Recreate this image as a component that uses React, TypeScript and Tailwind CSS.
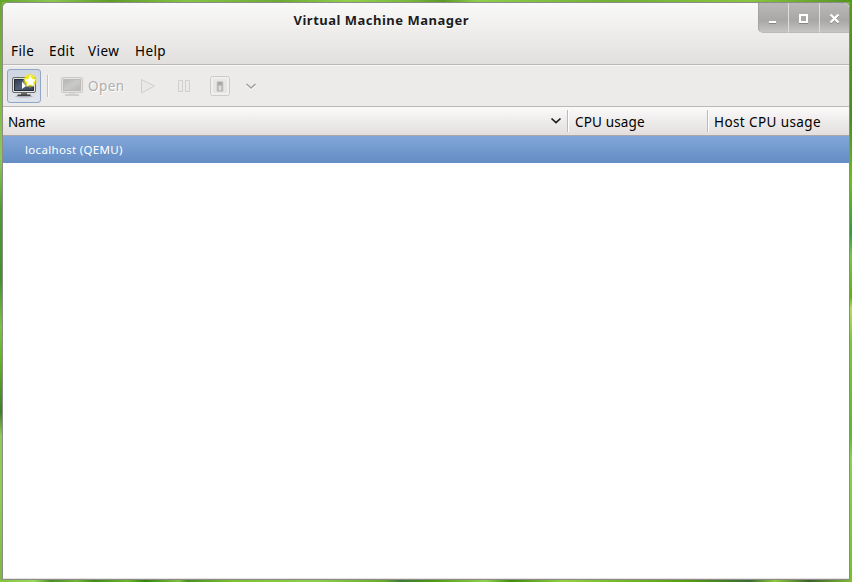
import type { ReactNode } from "react";

const font = "font-['Noto_Sans','Open_Sans',sans-serif]";

function TitleButton({ children, first = false }: { children: ReactNode; first?: boolean }) {
  return (
    <div
      className={`h-[30px] border-b border-[#bcbab9] bg-linear-to-b from-[#bab9b8] from-0% via-[#a8a7a6] via-60% to-[#c6c5c4] ${
        first ? "w-[30px] rounded-bl-[5px] border-l border-l-[#a5a4a3]" : "w-[31px] border-l border-l-[#dedddc]"
      }`}
    >
      {children}
    </div>
  );
}

function WindowControls() {
  return (
    <div className="flex h-[30px] w-[91px] shrink-0">
      <TitleButton first>
        <svg width="29" height="29" viewBox="0 0 29 29" shapeRendering="crispEdges">
          <rect x="10" y="20" width="7" height="1" fill="#858483" />
          <rect x="10" y="18" width="7" height="2" fill="#fff" />
        </svg>
      </TitleButton>
      <TitleButton>
        <svg width="30" height="29" viewBox="0 0 30 29" shapeRendering="crispEdges">
          <rect x="10" y="20" width="9" height="1" fill="#858483" />
          <path d="M10 11h9v9h-9z M12 13v5h5v-5z" fill="#fff" fillRule="evenodd" />
        </svg>
      </TitleButton>
      <TitleButton>
        <svg width="30" height="29" viewBox="0 0 30 29">
          <path d="M10.500 12.500l8 8M18.500 12.500l-8 8" stroke="#858483" strokeWidth="2" />
          <path d="M10.500 11.500l8 8M18.500 11.500l-8 8" stroke="#fff" strokeWidth="2.400" />
        </svg>
      </TitleButton>
    </div>
  );
}

function NewMachineIcon() {
  return (
    <svg width="26" height="26" viewBox="0 0 26 26">
      <defs>
        <linearGradient id="screen" x1="0" y1="0" x2="1" y2="1">
          <stop offset="0" stopColor="#323b50" />
          <stop offset=".5" stopColor="#52617b" />
          <stop offset="1" stopColor="#303a4e" />
        </linearGradient>
        <radialGradient id="glow">
          <stop offset="0" stopColor="#fff94c" />
          <stop offset=".6" stopColor="#f3eb08" />
          <stop offset="1" stopColor="#f5ed08" stopOpacity="0" />
        </radialGradient>
      </defs>
      <ellipse cx="13" cy="23.300" rx="9" ry="1.200" fill="#8c929a" opacity=".6" />
      <path d="M10 19h6v3h-6z" fill="#6b6d6c" />
      <path d="M6.500 21.500h13v1.500h-13z" fill="#40423f" />
      <rect x="1.500" y="4.500" width="23" height="15" rx="1.500" fill="#e3e4df" stroke="#686b66" />
      <rect x="3.500" y="6.500" width="19" height="11" fill="url(#screen)" stroke="#272e3b" />
      <path d="M11 8.500v7.500l4-3z" fill="#fff" />
      <circle cx="19" cy="7.500" r="7.500" fill="url(#glow)" />
      <path d="M19.200 1.900l1.800 4 4.300.5-3.200 2.900.9 4.400-3.800-2.200-3.900 2.200 1-4.400-3.200-2.900 4.300-.5z" fill="#fffff2" />
    </svg>
  );
}

function DisabledMonitorIcon() {
  return (
    <svg width="26" height="26" viewBox="0 0 26 26">
      <defs>
        <linearGradient id="grey" x1="0" y1="0" x2="1" y2="1">
          <stop offset="0" stopColor="#b5b5b3" />
          <stop offset=".5" stopColor="#c9c9c8" />
          <stop offset="1" stopColor="#b7b7b6" />
        </linearGradient>
      </defs>
      <path d="M10 18h6v3h-6z" fill="#d9d8d7" />
      <path d="M6 21h14v2H6z" fill="#cecdcc" />
      <rect x="2.500" y="4.500" width="21" height="15" rx="1.500" fill="#e4e3e2" stroke="#cbcac9" />
      <rect x="4.500" y="6.500" width="17" height="11" fill="url(#grey)" stroke="#bcbbba" />
    </svg>
  );
}

function Toolbar() {
  return (
    <div className="flex h-[42px] shrink-0 items-center border-b border-[#bab8b6] bg-[#edebea] pl-1 shadow-[inset_0_1px_0_#f8f7f6]">
      <div className="flex h-[34px] w-[34px] items-center justify-center rounded-[3px] border border-[#8ea6c8] bg-linear-to-b from-[#cfd6e1] to-[#dfe3ea]">
        <NewMachineIcon />
      </div>
      <div className="ml-1.5 h-[22px] w-0.5 border-l border-r border-l-[#c5c3c1] border-r-[#faf9f9]" />
      <div className="ml-[10px] h-[26px] w-[26px]">
        <DisabledMonitorIcon />
      </div>
      <span className="ml-[3px] w-[39px] text-[13.5px] leading-5 tracking-[0.4px] text-[#b0aeac] [text-shadow:1px_1px_0_#fff]">
        Open
      </span>
      <svg className="ml-3" width="20" height="20" viewBox="0 0 20 20">
        <path d="M2.500 3.500v13.500L15.500 10z" fill="#e9e8e7" stroke="#d0cfce" />
      </svg>
      <svg className="ml-4" width="20" height="20" viewBox="0 0 20 20">
        <path d="M3.500 4.500h4v11h-4zM10.500 4.500h4v11h-4z" fill="#ebeae9" stroke="#d0cfce" />
      </svg>
      <svg className="ml-[15px]" width="20" height="20" viewBox="0 0 20 20">
        <rect x=".5" y="0.500" width="19" height="19" rx="2" fill="#f0efee" stroke="#cccbca" />
        <rect x="3" y="3" width="14" height="14" rx="1" fill="#e7e6e5" />
        <rect x="7" y="5.500" width="6" height="10" rx="1" fill="#a9a8a7" stroke="#cccbca" />
        <rect x="8.500" y="9.500" width="3" height="5" fill="#dedddc" />
      </svg>
      <svg className="ml-[15px]" width="12" height="20" viewBox="0 0 12 20">
        <path d="M1.500 9l4.500 4 4.500-4" fill="none" stroke="#fff" strokeWidth="1.600" />
        <path d="M1.500 8l4.500 4 4.500-4" fill="none" stroke="#a3a19f" strokeWidth="1.600" />
      </svg>
    </div>
  );
}

function ListHeader() {
  return (
    <div className="flex h-[29px] shrink-0 items-center border-b border-[#a9a7aa] bg-linear-to-b from-[#fbfafa] to-[#e2dfdd] text-[13.5px] leading-5 text-black">
      <div className="flex w-[564px] items-center justify-between pr-[5px] pl-[5px]">
        <span className="pt-0.5 tracking-[-0.2px]">Name</span>
        <svg width="12" height="12" viewBox="0 0 12 12">
          <path d="M1.500 3.500l4.500 4.200 4.500-4.200" fill="none" stroke="#1d1d1d" strokeWidth="1.700" />
        </svg>
      </div>
      <div className="flex h-[22px] w-[140px] items-center border-l border-[#bcbab8] pl-[7px] shadow-[inset_1px_0_0_#fff]">
        <span className="pt-0.5 tracking-[0.15px]">CPU usage</span>
      </div>
      <div className="flex h-[22px] flex-1 items-center border-l border-[#bcbab8] pl-[6px] shadow-[inset_1px_0_0_#fff]">
        <span className="pt-0.5 tracking-[0.4px]">Host CPU usage</span>
      </div>
    </div>
  );
}

export default function App() {
  return (
    <div
      className={`flex h-[582px] w-[852px] flex-col overflow-hidden bg-linear-to-b from-[#7bb43e] via-[#72b52e] to-[#84bd36] ${font}`}
    >
      <div className="h-0.5 shrink-0 bg-[linear-gradient(90deg,#63a52c_0%,#8bc84d_6%,#5d9e25_13%,#84c443_22%,#6aad32_33%,#92cf4c_41%,#78b93c_48%,#5b9a28_52%,#8fce4b_56%,#6fb134_72%,#8ac53f_88%,#549520_100%)]" />
      <div className="flex h-[578px] shrink-0">
        <div className="w-0.5 bg-[linear-gradient(180deg,#6aa832_0%,#7fbc42_17%,#8cc95c_27%,#4f9a30_36%,#44912c_48%,#7bc043_56%,#62b41f_62%,#3f7d2a_71%,#8ecb58_75%,#8fce50_85%,#7fb843_100%)]" />
        <div className="flex w-[848px] flex-col overflow-hidden rounded-t-[6px] border border-[#8c8b89] bg-white">
          <div className="flex h-[62px] shrink-0 flex-col border-b border-[#bbb9b7] bg-linear-to-b from-[#f9f9f8] to-[#e2e0df]">
            <div className="flex h-[35px]">
              <div className="flex-1 pl-[290.5px] text-[13px] leading-[35px] font-bold tracking-[0.5px] whitespace-nowrap text-[#1c1c1c] [text-shadow:0_1px_0_#fff]">
                Virtual Machine Manager
              </div>
              <WindowControls />
            </div>
            <div className="flex h-[26px] items-center pb-px pl-2 text-[13.5px] leading-5 tracking-[0.4px] text-black">
              <span className="w-[38px]">File</span>
              <span className="w-[39px]">Edit</span>
              <span className="w-[47px]">View</span>
              <span>Help</span>
            </div>
          </div>
          <Toolbar />
          <ListHeader />
          <div className="flex h-[27px] shrink-0 items-center bg-linear-to-b from-[#82a6d9] to-[#648dc4] pt-px pl-[22px] text-[11.5px] tracking-[0.32px] text-white">
            <span>localhost (QEMU)</span>
          </div>
          <div className="flex-1 border-b border-[#e4e3e1] bg-white" />
        </div>
        <div className="w-0.5 bg-[linear-gradient(180deg,#5a981f_0%,#4a8a20_20%,#72bd25_31%,#35993f_40%,#7cc451_44%,#64ad12_51%,#b4dc62_53%,#7fc53a_59%,#5fb43a_75%,#8fcf55_79%,#79bf2c_100%)]" />
      </div>
      <div className="h-0.5 shrink-0 bg-[linear-gradient(90deg,#86c53c_0%,#9ad75a_4%,#4b8c28_6%,#72b535_9%,#3f8a1a_11%,#6cb62a_15%,#2f8410_17%,#82c040_21%,#468f26_22%,#7cbf2e_27%,#8fce4a_37%,#6aaa28_45%,#3d7a3a_47%,#4f9a10_51%,#92d24c_57%,#3f8a10_60%,#92d040_66%,#58a010_80%,#3a6b34_88%,#8ccb38_91%,#3d5e2c_95%,#7ec030_100%)]" />
    </div>
  );
}
